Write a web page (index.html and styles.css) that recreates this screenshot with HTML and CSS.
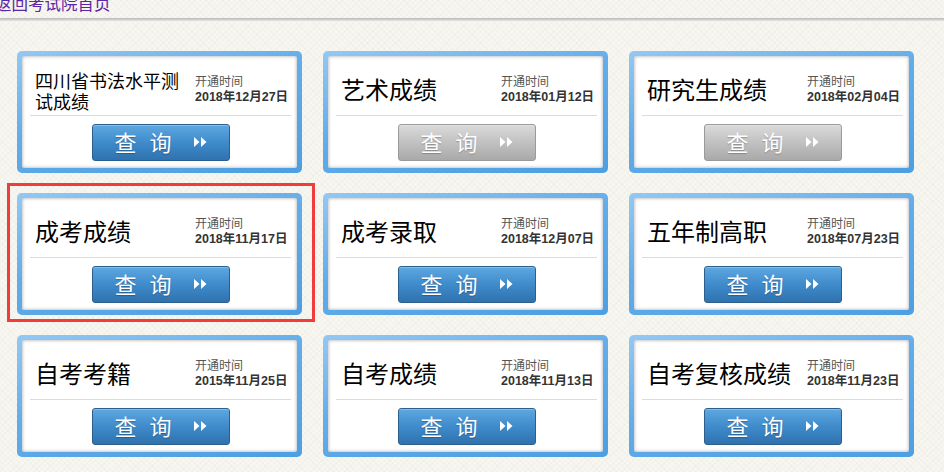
FILE: index.html
```html
<!DOCTYPE html>
<html lang="zh">
<head>
<meta charset="utf-8">
<title>成绩查询</title>
<link rel="stylesheet" href="styles.css">
</head>
<body>
<div class="header"><a class="home" href="#">返回考试院首页</a></div>
<div class="bar"></div>
<div class="grid">
  <div class="card"><div class="card-in">
    <div class="top"><div class="title small">四川省书法水平测试成绩</div><div class="date"><div class="lbl">开通时间</div><div class="d">2018年12月27日</div></div></div>
    <div class="sep"></div>
    <a class="btn" href="#"><span>查</span><span>询</span><svg class="arr" viewBox="0 0 13 10" width="13" height="10"><path d="M0 0L5.5 5L0 10Z M7 0L12.5 5L7 10Z" fill="#fff"/></svg></a>
  </div></div>
  <div class="card"><div class="card-in">
    <div class="top"><div class="title">艺术成绩</div><div class="date"><div class="lbl">开通时间</div><div class="d">2018年01月12日</div></div></div>
    <div class="sep"></div>
    <a class="btn gray" href="#"><span>查</span><span>询</span><svg class="arr" viewBox="0 0 13 10" width="13" height="10"><path d="M0 0L5.5 5L0 10Z M7 0L12.5 5L7 10Z" fill="#fff"/></svg></a>
  </div></div>
  <div class="card"><div class="card-in">
    <div class="top"><div class="title">研究生成绩</div><div class="date"><div class="lbl">开通时间</div><div class="d">2018年02月04日</div></div></div>
    <div class="sep"></div>
    <a class="btn gray" href="#"><span>查</span><span>询</span><svg class="arr" viewBox="0 0 13 10" width="13" height="10"><path d="M0 0L5.5 5L0 10Z M7 0L12.5 5L7 10Z" fill="#fff"/></svg></a>
  </div></div>
  <div class="card hl"><div class="card-in">
    <div class="top"><div class="title">成考成绩</div><div class="date"><div class="lbl">开通时间</div><div class="d">2018年11月17日</div></div></div>
    <div class="sep"></div>
    <a class="btn" href="#"><span>查</span><span>询</span><svg class="arr" viewBox="0 0 13 10" width="13" height="10"><path d="M0 0L5.5 5L0 10Z M7 0L12.5 5L7 10Z" fill="#fff"/></svg></a>
  </div></div>
  <div class="card"><div class="card-in">
    <div class="top"><div class="title">成考录取</div><div class="date"><div class="lbl">开通时间</div><div class="d">2018年12月07日</div></div></div>
    <div class="sep"></div>
    <a class="btn" href="#"><span>查</span><span>询</span><svg class="arr" viewBox="0 0 13 10" width="13" height="10"><path d="M0 0L5.5 5L0 10Z M7 0L12.5 5L7 10Z" fill="#fff"/></svg></a>
  </div></div>
  <div class="card"><div class="card-in">
    <div class="top"><div class="title">五年制高职</div><div class="date"><div class="lbl">开通时间</div><div class="d">2018年07月23日</div></div></div>
    <div class="sep"></div>
    <a class="btn" href="#"><span>查</span><span>询</span><svg class="arr" viewBox="0 0 13 10" width="13" height="10"><path d="M0 0L5.5 5L0 10Z M7 0L12.5 5L7 10Z" fill="#fff"/></svg></a>
  </div></div>
  <div class="card"><div class="card-in">
    <div class="top"><div class="title">自考考籍</div><div class="date"><div class="lbl">开通时间</div><div class="d">2015年11月25日</div></div></div>
    <div class="sep"></div>
    <a class="btn" href="#"><span>查</span><span>询</span><svg class="arr" viewBox="0 0 13 10" width="13" height="10"><path d="M0 0L5.5 5L0 10Z M7 0L12.5 5L7 10Z" fill="#fff"/></svg></a>
  </div></div>
  <div class="card"><div class="card-in">
    <div class="top"><div class="title">自考成绩</div><div class="date"><div class="lbl">开通时间</div><div class="d">2018年11月13日</div></div></div>
    <div class="sep"></div>
    <a class="btn" href="#"><span>查</span><span>询</span><svg class="arr" viewBox="0 0 13 10" width="13" height="10"><path d="M0 0L5.5 5L0 10Z M7 0L12.5 5L7 10Z" fill="#fff"/></svg></a>
  </div></div>
  <div class="card"><div class="card-in">
    <div class="top"><div class="title">自考复核成绩</div><div class="date"><div class="lbl">开通时间</div><div class="d">2018年11月23日</div></div></div>
    <div class="sep"></div>
    <a class="btn" href="#"><span>查</span><span>询</span><svg class="arr" viewBox="0 0 13 10" width="13" height="10"><path d="M0 0L5.5 5L0 10Z M7 0L12.5 5L7 10Z" fill="#fff"/></svg></a>
  </div></div>
</div>
</body>
</html>
```
FILE: styles.css
```css
html, body {
  margin: 0;
  padding: 0;
}
body {
  font-family: "Noto Sans CJK SC", "Noto Sans", sans-serif;
  background-color: #f7f6f1;
  background-image:
    repeating-linear-gradient(45deg, rgba(200,198,180,0.10) 0 1px, transparent 1px 4px),
    repeating-linear-gradient(-45deg, rgba(200,198,180,0.10) 0 1px, transparent 1px 4px);
  overflow: hidden;
}
.header {
  margin-top: -7px;
  height: 25px;
  line-height: 20px;
  text-indent: -5px;
  white-space: nowrap;
}
.home {
  font-size: 16.5px;
  color: #5a25a6;
  text-decoration: none;
}
.bar {
  height: 3px;
  background: linear-gradient(to bottom, #b9b9b9, #d2d2d2 60%, #e6e6e2);
}
.grid {
  display: grid;
  grid-template-columns: repeat(3, 285px);
  column-gap: 21px;
  row-gap: 20px;
  padding: 30px 0 0 17px;
}
.card {
  height: 122px;
  box-sizing: border-box;
  padding: 5px;
  border-radius: 5px;
  background: linear-gradient(165deg, #93c8f3 0%, #62acea 45%, #4c9fe3 100%);
}
.card.hl {
  position: relative;
}
.card.hl::after {
  content: "";
  position: absolute;
  left: -10px;
  top: -10px;
  right: -13px;
  bottom: -7px;
  border: 3px solid #f23b3b;
  pointer-events: none;
}
.card-in {
  height: 100%;
  box-sizing: border-box;
  background: #fff;
  border-radius: 2px;
  box-shadow: inset 0 0 3px 1px rgba(0,0,0,0.22);
  padding: 0 6px 0 8px;
}
.top {
  height: 59px;
  box-sizing: border-box;
  padding: 6px 2px 0 5px;
  display: flex;
  align-items: center;
}
.title {
  flex: 1;
  font-size: 24px;
  line-height: 28px;
  color: #000;
  min-width: 0;
}
.title.small {
  font-size: 18px;
  line-height: 21px;
  padding-top: 5px;
}
.date {
  width: 94px;
  flex: none;
  line-height: 16px;
}
.lbl {
  font-size: 12px;
  color: #555;
}
.d {
  font-family: "Liberation Sans", "Noto Sans CJK SC", sans-serif;
  font-weight: bold;
  font-size: 12.5px;
  color: #333;
  white-space: nowrap;
}
.sep {
  height: 1px;
  background: #e2ddc8;
}
.btn {
  display: flex;
  align-items: center;
  justify-content: center;
  gap: 13px;
  width: 138px;
  height: 37px;
  box-sizing: border-box;
  padding-bottom: 4px;
  margin: 8px auto 0;
  border: 1px solid #2c5f8d;
  border-radius: 3px;
  background: linear-gradient(to bottom, #5ea8e0 0%, #3f8bcb 50%, #2f72ae 100%);
  box-shadow: inset 0 1px 0 rgba(255,255,255,0.25);
  color: #fff;
  font-size: 22px;
  line-height: 1;
  text-decoration: none;
  text-shadow: 0 1px 1px rgba(0,0,0,0.25);
}
.btn .arr {
  margin-left: 9px;
  margin-top: 3px;
}
.btn.gray {
  border-color: #9a9a9a;
  background: linear-gradient(to bottom, #dadada 0%, #c1c1c1 50%, #a9a9a9 100%);
}
```
